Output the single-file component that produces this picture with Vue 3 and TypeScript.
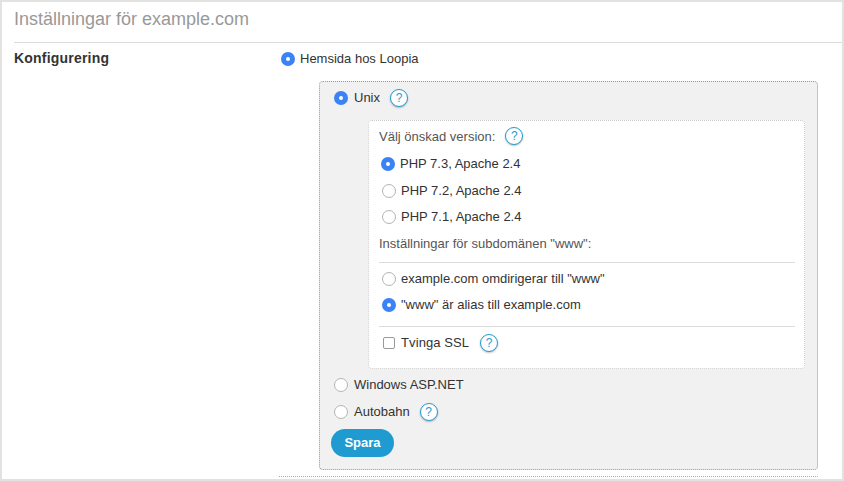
<script setup lang="ts">
const phpVersions = [
  { label: 'PHP 7.3, Apache 2.4', checked: true },
  { label: 'PHP 7.2, Apache 2.4', checked: false },
  { label: 'PHP 7.1, Apache 2.4', checked: false },
]
const wwwOptions = [
  { label: 'example.com omdirigerar till "www"', checked: false },
  { label: '"www" är alias till example.com', checked: true },
]
</script>

<template>
  <div class="page">
    <h1 class="title">Inställningar för example.com</h1>
    <div class="row">
      <div class="label">Konfigurering</div>
      <div class="content">
        <label class="opt top"><span class="radio on"></span>Hemsida hos Loopia</label>
        <div class="panel">
          <div class="opt unix"><span class="radio on"></span>Unix<span class="help">?</span></div>
          <div class="inner">
            <div class="head">Välj önskad version:<span class="help">?</span></div>
            <div class="php-list">
              <div v-for="p in phpVersions" :key="p.label" class="opt php">
                <span class="radio" :class="{ on: p.checked }"></span>{{ p.label }}
              </div>
            </div>
            <div class="head sub">Inställningar för subdomänen "www":</div>
            <div class="group">
              <div v-for="w in wwwOptions" :key="w.label" class="opt www">
                <span class="radio" :class="{ on: w.checked }"></span>{{ w.label }}
              </div>
            </div>
            <div class="ssl"><span class="check"></span><span class="ssl-text">Tvinga SSL</span><span class="help">?</span></div>
          </div>
          <div class="others">
            <div class="opt plain"><span class="radio"></span>Windows ASP.NET</div>
            <div class="opt plain"><span class="radio"></span>Autobahn<span class="help">?</span></div>
          </div>
          <button class="save" type="button">Spara</button>
        </div>
        <div class="dots"></div>
      </div>
    </div>
  </div>
</template>

<style scoped>
.page {
  box-sizing: border-box;
  width: 844px;
  height: 481px;
  border: 2px solid #e2e2e2;
  padding-left: 12px;
  background: #fff;
  font-family: "Liberation Sans", Arial, sans-serif;
  font-size: 13px;
  color: #333;
  overflow: hidden;
}
.title {
  box-sizing: border-box;
  height: 41px;
  margin: 0;
  padding-top: 6px;
  border-bottom: 1px solid #ddd;
  font-size: 18px;
  line-height: 22px;
  font-weight: 400;
  color: #999;
}
.row { display: flex; }
.label {
  width: 265px;
  padding-top: 7px;
  font-size: 14px;
  line-height: 17px;
  font-weight: 700;
  letter-spacing: 0.2px;
  color: #333;
}
.content { width: 539px; }
.opt { display: flex; align-items: center; line-height: 16px; }
.top { height: 16px; margin: 8px 0 0 2px; }
.radio {
  box-sizing: border-box;
  flex: none;
  width: 14px;
  height: 14px;
  margin-right: 5px;
  border-radius: 50%;
  border: 1px solid #b4b4b4;
  background: #fff;
  position: relative;
}
.radio.on { border: 0; background: #3b82f6; }
.radio.on::after {
  content: "";
  position: absolute;
  left: 5px;
  top: 5px;
  width: 4px;
  height: 4px;
  border-radius: 50%;
  background: #fff;
}
.panel {
  box-sizing: border-box;
  width: 499px;
  height: 389px;
  margin: 14px 0 0 40px;
  padding: 8px 13px 0 11px;
  background: #f1f1f1;
  border: 1px dotted #999;
  border-right: 1px solid #c4c4c4;
  border-radius: 4px;
}
.unix { height: 16px; padding-left: 3px; }
.unix .radio, .plain .radio { margin-right: 6px; }
.inner {
  box-sizing: border-box;
  width: 437px;
  height: 249px;
  margin: 14px 0 0 37px;
  padding: 0 9px 0 10px;
  background: #fff;
  border: 1px dotted #ccc;
  border-radius: 4px;
}
.head { display: flex; align-items: center; height: 16px; margin-top: 7px; color: #555; }
.php-list { margin-top: 7px; }
.php { height: 26.5px; padding-left: 2px; }
.php .radio:not(.on) { margin-left: 1px; }
.sub { margin-top: 4px; height: 17px; }
.group {
  margin-top: 10px;
  padding: 3px 0 7px;
  border-top: 1px solid #ddd;
  border-bottom: 1px solid #ddd;
}
.www { height: 26.5px; padding-left: 3px; }
.ssl { display: flex; align-items: center; height: 16px; margin-top: 8px; padding-left: 4px; }
.ssl-text { letter-spacing: 0.1px; }
.ssl .help { margin-left: 11px; }
.check {
  box-sizing: border-box;
  width: 12px;
  height: 12px;
  margin-right: 6px;
  border: 1px solid #999;
  border-radius: 2px;
  background: #fff;
}
.help {
  box-sizing: border-box;
  display: inline-flex;
  align-items: center;
  justify-content: center;
  width: 18px;
  height: 18px;
  margin-left: 10px;
  border: 1.5px solid #1f9bd1;
  border-radius: 50%;
  background: #fff;
  box-shadow: 0 1px 2px rgba(0, 0, 0, 0.25);
  font-size: 12px;
  color: #1f9bd1;
}
.others { margin-top: 2px; }
.plain { height: 27px; padding-left: 3px; }
.save {
  display: block;
  width: 63px;
  height: 28px;
  margin-top: 4px;
  padding: 0 0 1px;
  border: 0;
  border-radius: 14px;
  background: #1f9bd1;
  color: #fff;
  font-family: "Liberation Sans", Arial, sans-serif;
  font-size: 13px;
  font-weight: 700;
}
.dots {
  margin-top: 6px;
  border-top: 1px dotted #aaa;
}
</style>
